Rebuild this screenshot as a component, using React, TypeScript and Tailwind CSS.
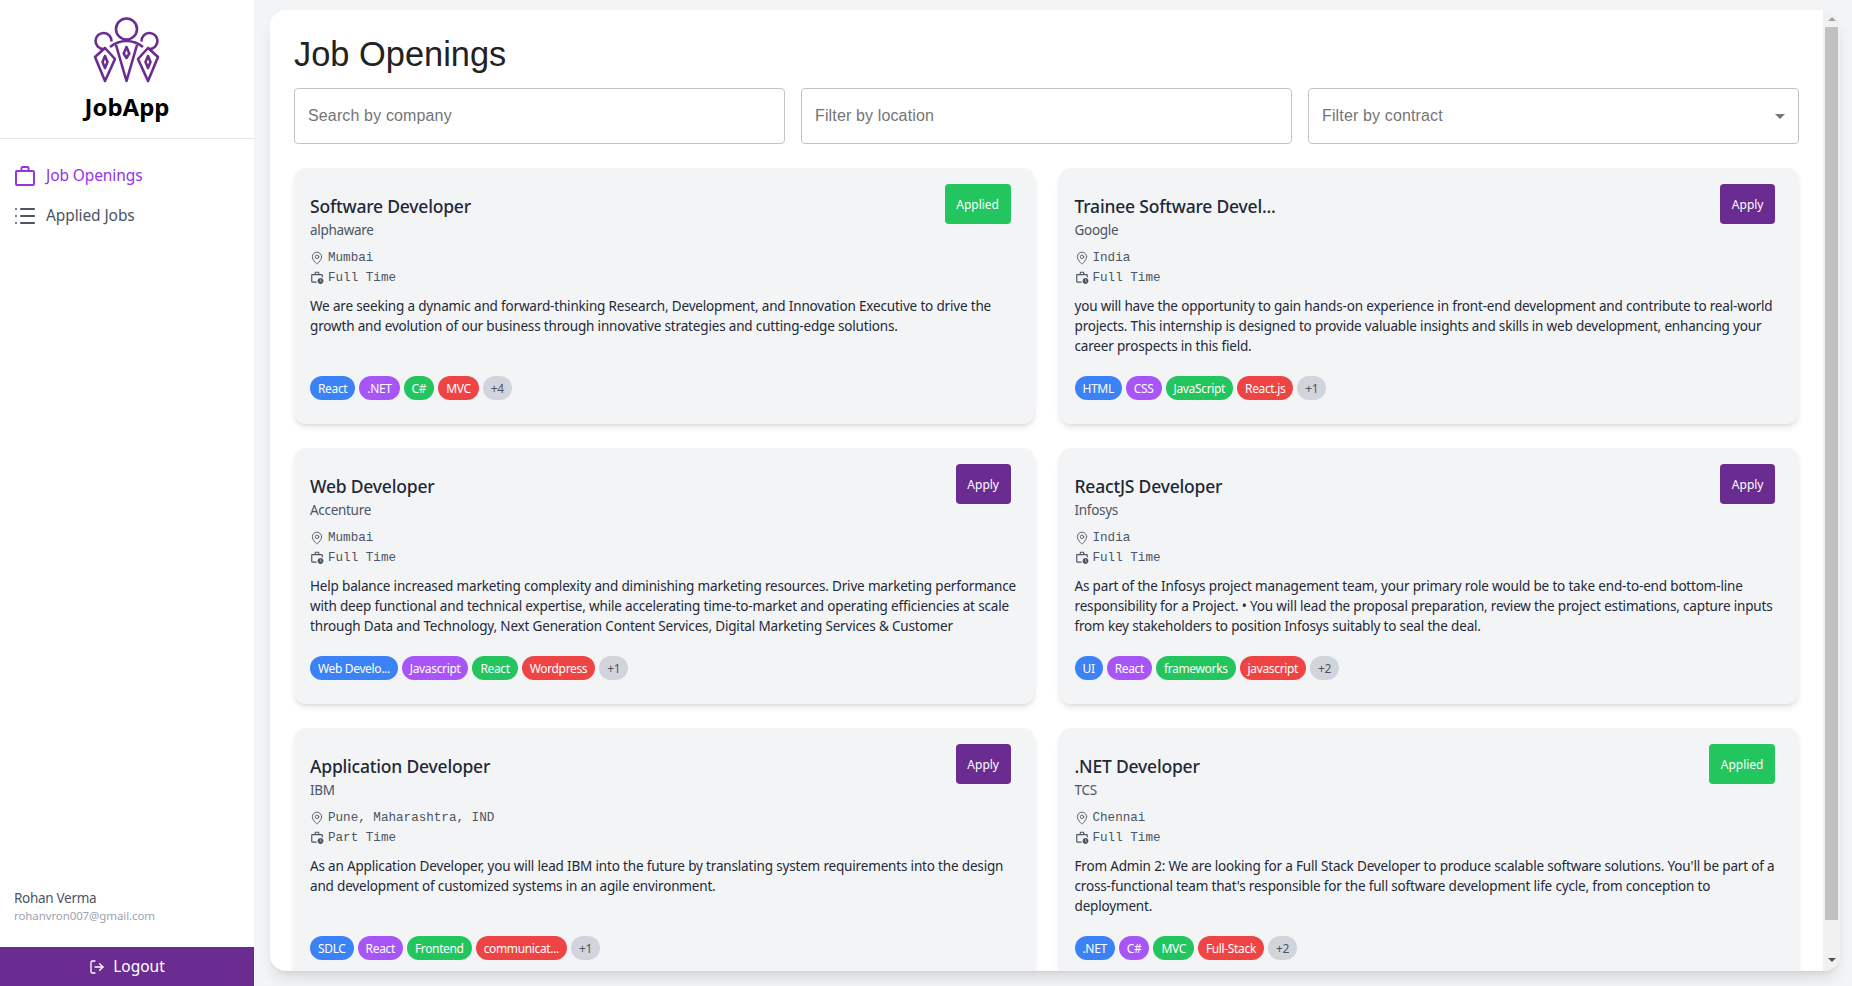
import React from 'react';
import { List, LogOut, MapPin } from 'lucide-react';
import { MdOutlineWorkHistory } from 'react-icons/md';

type Job = {
  title: string;
  company: string;
  location: string;
  contract: string;
  description: string;
  tags: string[];
  more: string;
  applied?: boolean;
};

const jobs: Job[] = [
  {
    title: 'Software Developer',
    company: 'alphaware',
    location: 'Mumbai',
    contract: 'Full Time',
    description:
      'We are seeking a dynamic and forward-thinking Research, Development, and Innovation Executive to drive the growth and evolution of our business through innovative strategies and cutting-edge solutions.',
    tags: ['React', '.NET', 'C#', 'MVC'],
    more: '+4',
    applied: true,
  },
  {
    title: 'Trainee Software Devel...',
    company: 'Google',
    location: 'India',
    contract: 'Full Time',
    description:
      'you will have the opportunity to gain hands-on experience in front-end development and contribute to real-world projects. This internship is designed to provide valuable insights and skills in web development, enhancing your career prospects in this field.',
    tags: ['HTML', 'CSS', 'JavaScript', 'React.js'],
    more: '+1',
  },
  {
    title: 'Web Developer',
    company: 'Accenture',
    location: 'Mumbai',
    contract: 'Full Time',
    description:
      'Help balance increased marketing complexity and diminishing marketing resources. Drive marketing performance with deep functional and technical expertise, while accelerating time-to-market and operating efficiencies at scale through Data and Technology, Next Generation Content Services, Digital Marketing Services & Customer',
    tags: ['Web Develo...', 'Javascript', 'React', 'Wordpress'],
    more: '+1',
  },
  {
    title: 'ReactJS Developer',
    company: 'Infosys',
    location: 'India',
    contract: 'Full Time',
    description:
      'As part of the Infosys project management team, your primary role would be to take end-to-end bottom-line responsibility for a Project. • You will lead the proposal preparation, review the project estimations, capture inputs from key stakeholders to position Infosys suitably to seal the deal.',
    tags: ['UI', 'React', 'frameworks', 'javascript'],
    more: '+2',
  },
  {
    title: 'Application Developer',
    company: 'IBM',
    location: 'Pune, Maharashtra, IND',
    contract: 'Part Time',
    description:
      'As an Application Developer, you will lead IBM into the future by translating system requirements into the design and development of customized systems in an agile environment.',
    tags: ['SDLC', 'React', 'Frontend', 'communicat...'],
    more: '+1',
  },
  {
    title: '.NET Developer',
    company: 'TCS',
    location: 'Chennai',
    contract: 'Full Time',
    description:
      "From Admin 2: We are looking for a Full Stack Developer to produce scalable software solutions. You'll be part of a cross-functional team that's responsible for the full software development life cycle, from conception to deployment.",
    tags: ['.NET', 'C#', 'MVC', 'Full-Stack'],
    more: '+2',
    applied: true,
  },
];

const tagColors = ['bg-[#3b82f6]', 'bg-[#a855f7]', 'bg-[#22c55e]', 'bg-[#ef4444]'];

function Logo() {
  return (
    <svg width="74" height="70" viewBox="0 0 74 70" fill="none" stroke="#6b2c91" strokeWidth="2.6" strokeLinejoin="round">
      <circle cx="36.5" cy="15" r="10.5" />
      <path d="M21.5 27.5a8 8 0 1 0-8 7.5M51.5 27.5a8 8 0 1 1 8 7.5" />
      <path d="M20 33c10-8 23-8 33 0" />
      <path d="M26 31 36.5 67 47 31" />
      <path d="M36.5 33l-2.8 6.5 2.8 4.5 2.8-4.5z" />
      <path d="M15 34 5 43l10 24 10-22z" />
      <path d="M58 34l10 9-10 24-10-22z" />
      <path d="M15 42l-2.5 6 2.5 6 2.5-6z" />
      <path d="M58 42l-2.5 6 2.5 6 2.5-6z" />
    </svg>
  );
}

function BriefcaseIcon() {
  return (
    <svg width="24" height="24" viewBox="0 0 24 24" fill="none" stroke="currentColor" strokeWidth="2" strokeLinejoin="round">
      <rect x="3" y="7" width="18" height="14" rx="1" />
      <path d="M8.5 7V4a1 1 0 0 1 1-1h5a1 1 0 0 1 1 1v3" />
    </svg>
  );
}

function JobCard({ job }: { job: Job }) {
  return (
    <div className="flex h-[256px] flex-col rounded-xl bg-[#f3f4f6] p-4 pb-6 shadow-md">
      <div className="flex justify-between pr-2">
        <div className="pt-2">
          <h2 className="text-[17.5px] leading-7 font-medium tracking-[-0.2px] text-[#1f2937]">{job.title}</h2>
          <p className="text-[13.5px] leading-5 tracking-[-0.3px] text-[#4b5563]">{job.company}</p>
        </div>
        <button
          className={`h-10 rounded px-[11.5px] pt-px text-xs text-white ${job.applied ? 'bg-[#22c55e]' : 'bg-[#6b2c91]'}`}
        >
          {job.applied ? 'Applied' : 'Apply'}
        </button>
      </div>
      <div className="mt-2 font-['Liberation_Mono',monospace] text-[12.6px] leading-5 text-[#4b5563]">
        <div className="flex items-center gap-1">
          <span className="flex w-[14px] justify-center"><MapPin size={14} strokeWidth={1.5} /></span>
          {job.location}
        </div>
        <div className="flex items-center gap-1">
          <span className="mb-px flex w-[14px] justify-center"><MdOutlineWorkHistory size={15} /></span>
          {job.contract}
        </div>
      </div>
      <p className="mt-2 text-[13.5px] leading-5 tracking-[-0.17px] text-[#1f2937]">{job.description}</p>
      <div className="mt-auto flex gap-1 tracking-[-0.35px]">
        {job.tags.map((tag, i) => (
          <span key={tag} className={`flex h-6 items-center rounded-full px-2 pt-px text-xs text-white ${tagColors[i]}`}>
            {tag}
          </span>
        ))}
        <span className="flex h-6 items-center rounded-full bg-[#d1d5db] px-2 pt-px text-xs text-[#4b5563]">{job.more}</span>
      </div>
    </div>
  );
}

function App() {
  return (
    <div className="flex h-[986px] overflow-hidden bg-[#f3f4f6] font-['Noto_Sans',sans-serif]">
      <aside className="flex w-[254px] shrink-0 flex-col bg-white">
        <div className="flex h-[139px] flex-col items-center border-b border-[#e5e7eb] pt-[14px]">
          <Logo />
          <div className="mt-[7px] text-2xl leading-8 font-bold text-black">JobApp</div>
        </div>
        <nav className="flex flex-col gap-4 pt-[25px] pl-[13px] text-[15.5px] tracking-[-0.1px]">
          <a className="flex h-6 items-center gap-[9px] text-[#9333ea]">
            <BriefcaseIcon />
            Job Openings
          </a>
          <a className="flex h-6 items-center gap-[9px] text-[#4b5563]">
            <List size={24} />
            Applied Jobs
          </a>
        </nav>
        <div className="mt-auto px-[14px] pb-[23px]">
          <div className="text-[13.5px] leading-5 tracking-[-0.3px] text-[#4b5563]">Rohan Verma</div>
          <div className="text-[11.5px] leading-4 tracking-[-0.1px] text-[#9ca3af]">rohanvron007@gmail.com</div>
        </div>
        <button className="flex h-[39px] items-center justify-center gap-2 bg-[#6b2c91] pt-px text-[15.5px] text-white">
          <LogOut size={16} />
          Logout
        </button>
      </aside>

      <main className="mt-[10px] mr-3 mb-[15px] ml-4 flex flex-1 overflow-hidden rounded-2xl bg-white shadow-lg">
        <div className="flex-1 overflow-hidden px-6 pt-[17px]">
          <h1 className="mb-[7px] font-['Liberation_Sans',sans-serif] text-[34.4px] leading-[54px] text-[#222]">Job Openings</h1>
          <div className="grid grid-cols-3 gap-4 font-['Liberation_Sans',sans-serif] text-base tracking-[0.14px]">
            <input
              placeholder="Search by company"
              className="h-14 rounded border border-[#c4c4c4] px-[13px] outline-none placeholder:text-[#757575]"
            />
            <input
              placeholder="Filter by location"
              className="h-14 rounded border border-[#c4c4c4] px-[13px] outline-none placeholder:text-[#757575]"
            />
            <div className="flex h-14 items-center justify-between rounded border border-[#c4c4c4] pr-[13px] pl-[13px] text-[#757575]">
              Filter by contract
              <span className="h-0 w-0 border-x-[5px] border-t-[5px] border-x-transparent border-t-[#757575]" />
            </div>
          </div>
          <div className="mt-6 grid grid-cols-2 gap-6">
            {jobs.map((job) => (
              <JobCard key={job.title} job={job} />
            ))}
          </div>
        </div>
        <div className="flex w-[17px] shrink-0 flex-col items-center bg-[#f1f1f1]">
          <span className="mt-[7px] h-0 w-0 border-x-4 border-b-4 border-x-transparent border-b-[#a3a3a3]" />
          <div className="mt-[6px] h-[893px] w-[13px] bg-[#c1c1c1]" />
          <span className="mt-[38px] h-0 w-0 border-x-4 border-t-4 border-x-transparent border-t-[#505050]" />
        </div>
      </main>
    </div>
  );
}

export default App;
